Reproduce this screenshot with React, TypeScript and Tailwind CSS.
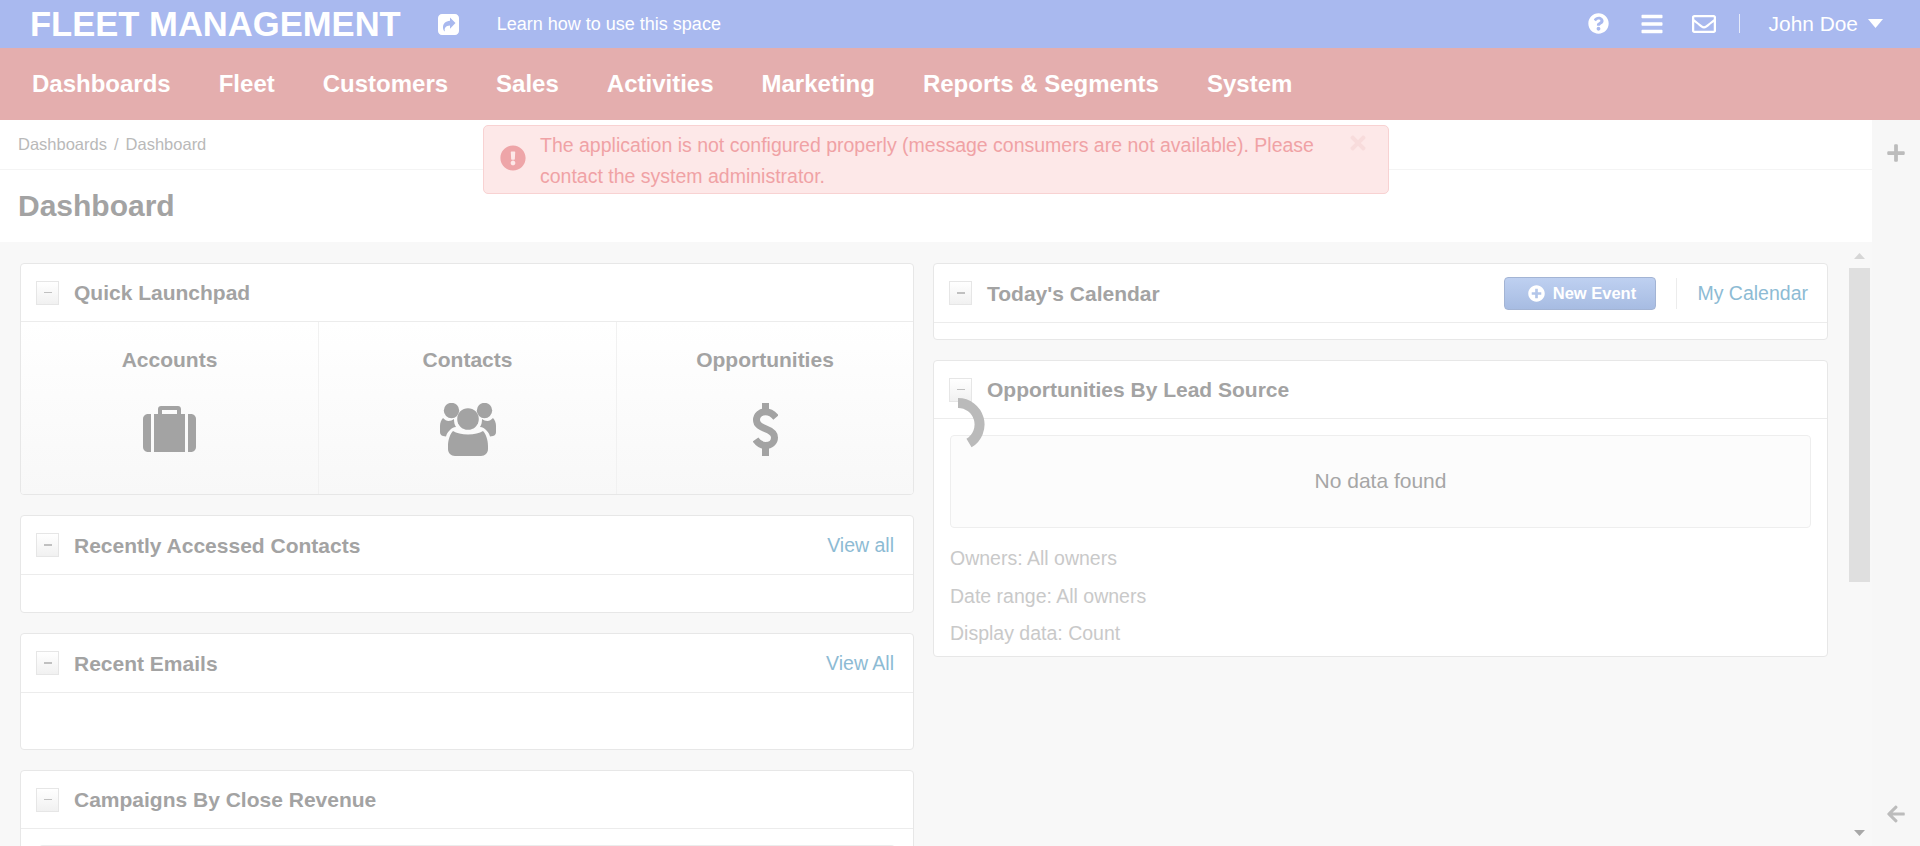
import React from "react";
import {
  FaQuestionCircle,
  FaBars,
  FaRegEnvelope,
  FaPlus,
  FaArrowLeft,
  FaExclamationCircle,
  FaPlusCircle,
  FaTimes,
} from "react-icons/fa";

const nav = ["Dashboards", "Fleet", "Customers", "Sales", "Activities", "Marketing", "Reports & Segments", "System"];

function ShareIcon() {
  return (
    <svg width="21" height="21" viewBox="0 0 21 21" className="ml-[37px] shrink-0">
      <path
        fillRule="evenodd"
        fill="#ffffff"
        d="M4 0h13c2.200 0 4 1.800 4 4v13c0 2.200-1.800 4-4 4H4c-2.200 0-4-1.800-4-4V4c0-2.200 1.800-4 4-4zM12 3.500v3.200C7.500 7 5 9.500 5 13.500c0 1.300.5 2.700 1.300 3.700.3.300.6.100.5-.2-.6-3 .9-5.200 5.200-5.400v3.200l5.500-5.700z"
      />
    </svg>
  );
}

function SuitcaseIcon() {
  return (
    <svg width="53" height="46" viewBox="0 0 53 46" fill="#a3a3a3">
      <path d="M15 8V3c0-1.700 1.300-3 3-3h17c1.700 0 3 1.300 3 3v5h-4V4H19v4z" />
      <path d="M8 8H5c-2.800 0-5 2.200-5 5v28c0 2.800 2.200 5 5 5h3z" />
      <path d="M11 8h31v38H11z" />
      <path d="M45 8h3c2.800 0 5 2.200 5 5v28c0 2.800-2.200 5-5 5h-3z" />
    </svg>
  );
}

function GroupIcon() {
  const side = "M3 15c2 2 3.500 3 5.500 3s4-1 5.500-2c0 3 .5 6 2 8-2.500 0-5 1.500-6 3-2 2-3.500 4-4 6.500L3 33c-2-.5-3-2-3-4v-6c0-3 1-6 3-8z";
  return (
    <svg width="56" height="53" viewBox="0 0 56 53" fill="#a3a3a3">
      <circle cx="11.500" cy="7.500" r="7.700" />
      <circle cx="44.500" cy="7.500" r="7.700" />
      <path d={side} />
      <g transform="translate(56,0) scale(-1,1)">
        <path d={side} />
      </g>
      <circle cx="28" cy="16" r="10.800" />
      <path d="M13 28c3.500 2.200 8.500 3.500 15 3.500s11.500-1.300 15-3.500c3 3 5 9 5 15v3c0 4-3 7-7 7H15c-4 0-7-3-7-7v-3c0-6 2-12 5-15z" />
    </svg>
  );
}

function DollarIcon() {
  return (
    <svg width="25" height="53" viewBox="0 0 25 53" fill="none">
      <path d="M9 0h7v8H9zM9 45h7v8H9z" fill="#a3a3a3" />
      <path
        d="M23 14.500C20 11 16.500 8.800 12.500 8.800 7.500 8.800 3.500 12 3.500 17 3.500 22 8 24 12.500 25.800 17 27.500 21.500 29.500 21.500 34.500 21.500 39.500 17.500 42.500 12.500 42.500 8.500 42.500 5 40 2.500 36.500"
        stroke="#a3a3a3"
        strokeWidth="7"
      />
    </svg>
  );
}

function Caret({ up, color, w, h, className = "" }: { up?: boolean; color: string; w: number; h: number; className?: string }) {
  return (
    <svg width={w} height={h} viewBox="0 0 12 7" preserveAspectRatio="none" className={`shrink-0 ${className}`}>
      <path d={up ? "M6 0l6 7H0z" : "M0 0h12L6 7z"} fill={color} />
    </svg>
  );
}

function Collapse() {
  return (
    <span className="flex h-[24px] w-[23px] shrink-0 items-center justify-center border border-[#e6e6e6] bg-gradient-to-b from-[#ffffff] to-[#f1f1f1] text-[#a8a8a8]">
      <span className="h-[1.5px] w-[8px] bg-[#c0c0c0]" />
    </span>
  );
}

function Head({ title, right, h = "h-[58px]" }: { title: string; right?: React.ReactNode; h?: string }) {
  return (
    <div className={`flex ${h} shrink-0 items-center border-b border-[#ececec] pl-[15px] pr-[19px]`}>
      <Collapse />
      <h2 className="ml-[15px] text-[21px] font-bold leading-none text-[#a3a3a3]">{title}</h2>
      {right && <div className="ml-auto flex items-center">{right}</div>}
    </div>
  );
}

function Card({ className = "", children }: { className?: string; children: React.ReactNode }) {
  return (
    <section className={`flex shrink-0 flex-col overflow-hidden rounded-[4px] border border-[#e7e7e7] bg-white ${className}`}>
      {children}
    </section>
  );
}

function Launch({ label, icon, divide }: { label: string; icon: React.ReactNode; divide?: boolean }) {
  return (
    <div className={`flex flex-col items-center pt-[26px] ${divide ? "border-r border-[#f1f1f1]" : ""}`}>
      <span className="text-[21px] font-bold leading-[24px] text-[#a3a3a3]">{label}</span>
      <span className="mt-[29px] flex h-[56px] items-center justify-center">{icon}</span>
    </div>
  );
}

export default function App() {
  return (
    <div
      className="relative flex h-[846px] w-[1920px] flex-col overflow-hidden bg-[#f8f8f8]"
      style={{ fontFamily: '"Liberation Sans", Arial, sans-serif' }}
    >
      <header className="flex h-[48px] shrink-0 items-center bg-[#a9b9ef] pl-[30px] pr-[37px] text-white">
        <span className="text-[34.600px] font-bold leading-none">FLEET MANAGEMENT</span>
        <ShareIcon />
        <span className="ml-[38px] text-[18px]">Learn how to use this space</span>
        <div className="ml-auto flex items-center">
          <FaQuestionCircle className="text-[21px]" />
          <FaBars className="ml-[31px] text-[24px]" />
          <FaRegEnvelope className="ml-[28px] text-[24px]" />
          <span className="ml-[23px] h-[19px] w-px bg-white/70" />
          <span className="ml-[29px] text-[20.900px]">John Doe</span>
          <Caret color="#ffffff" w={15} h={9} className="ml-[10px]" />
        </div>
      </header>
      <nav className="flex h-[72px] shrink-0 items-center gap-[48px] bg-[#e4aeae] pl-[32px] text-[24px] font-bold text-white">
        {nav.map((n) => (
          <span key={n}>{n}</span>
        ))}
      </nav>
      <div className="flex min-h-0 flex-1">
        <main className="flex min-w-0 flex-1 flex-col">
          <div className="flex h-[50px] shrink-0 items-center border-b border-[#f4f4f4] bg-white pl-[18px] text-[16.500px] text-[#b9b9b9]">
            Dashboards<span className="mx-[7px]">/</span>Dashboard
          </div>
          <div className="flex h-[72px] shrink-0 items-center bg-white pb-[2px] pl-[18px] text-[30px] font-bold text-[#a3a3a3]">
            Dashboard
          </div>
          <div className="flex min-h-0 flex-1 pl-[20px] pt-[21px]">
            <div className="flex w-[894px] shrink-0 flex-col gap-[20px]">
              <Card className="h-[232px]">
                <Head title="Quick Launchpad" />
                <div className="grid flex-1 grid-cols-[298px_298px_1fr] bg-gradient-to-b from-[#ffffff] to-[#f8f8f8]">
                  <Launch label="Accounts" divide icon={<SuitcaseIcon />} />
                  <Launch label="Contacts" divide icon={<GroupIcon />} />
                  <Launch label="Opportunities" icon={<DollarIcon />} />
                </div>
              </Card>
              <Card className="h-[98px]">
                <Head
                  h="h-[59px]"
                  title="Recently Accessed Contacts"
                  right={<a className="pt-[2px] text-[19.500px] text-[#8dbbd4]">View all</a>}
                />
              </Card>
              <Card className="h-[117px]">
                <Head
                  h="h-[59px]"
                  title="Recent Emails"
                  right={<a className="pt-[2px] text-[19.500px] text-[#8dbbd4]">View All</a>}
                />
              </Card>
              <Card className="h-[120px]">
                <Head title="Campaigns By Close Revenue" />
                <div className="mx-[18px] mt-[16px] flex-1 rounded-t-[4px] border-t border-[#ececec]" />
              </Card>
            </div>
            <div className="ml-[19px] flex w-[895px] shrink-0 flex-col gap-[20px]">
              <Card className="h-[77px]">
                <Head
                  h="h-[59px]"
                  title="Today's Calendar"
                  right={
                    <>
                      <button className="mt-[1px] flex h-[33px] w-[152px] items-center justify-center rounded-[4px] border border-[#a3b4d4] bg-gradient-to-b from-[#bed0f1] to-[#a7bce2] pl-[3px] text-[16.500px] font-bold text-white">
                        <FaPlusCircle className="mr-[8px] text-[17px]" />
                        New Event
                      </button>
                      <span className="ml-[20px] h-[31px] w-px bg-[#ececec]" />
                      <a className="ml-[20px] pt-[2px] text-[19.500px] text-[#8dbbd4]">My Calendar</a>
                    </>
                  }
                />
              </Card>
              <Card className="h-[297px]">
                <Head title="Opportunities By Lead Source" />
                <div className="mx-[16px] mt-[16px] flex h-[93px] shrink-0 items-center justify-center rounded-[4px] border border-[#eeeeee] bg-[#fcfcfc] pb-[2px] text-[21px] text-[#a6a6a6]">
                  No data found
                </div>
                <div className="mx-[16px] mt-[19px] flex flex-col gap-[14.500px] text-[19.500px] leading-[23px] text-[#c9c9c9]">
                  <span>Owners: All owners</span>
                  <span>Date range: All owners</span>
                  <span>Display data: Count</span>
                </div>
              </Card>
            </div>
            <div className="ml-[21px] flex h-[583px] w-[21px] shrink-0 -translate-y-[10px] flex-col items-center">
              <Caret up color="#d6d6d6" w={11} h={6} />
              <div className="mt-[9px] h-[314px] w-full bg-[#dfdfdf]" />
              <Caret color="#a8a8a8" w={11} h={6} className="mt-auto" />
            </div>
          </div>
        </main>
        <aside className="flex w-[48px] shrink-0 flex-col items-center justify-between bg-[#f7f7f7] pb-[22px] pt-[23px]">
          <FaPlus className="text-[20px] text-[#bcbcbc]" />
          <FaArrowLeft className="text-[20px] text-[#bcbcbc]" />
        </aside>
      </div>

      <div className="absolute left-[483px] top-[125px] flex h-[69px] w-[906px] rounded-[5px] border border-[#f8d2d2] bg-[#fde8e8] pl-[16px] pr-[19px] text-[#f0a2a5]">
        <FaExclamationCircle className="mt-[19px] shrink-0 text-[26px] text-[#eea5a8]" />
        <p className="ml-[14px] flex-1 pt-[4px] text-[19.500px] leading-[30.500px]">
          The application is not configured properly (message consumers are not available). Please contact the system administrator.
        </p>
        <FaTimes className="ml-[20px] mt-[6px] shrink-0 text-[22px] text-[#f8dcdc]" />
      </div>

      <svg className="absolute left-[950px] top-[398px]" width="40" height="52" viewBox="0 0 40 52" fill="none">
        <path d="M8 5A21.500 21.500 0 0 1 19 45" stroke="#bababa" strokeWidth="10" />
      </svg>
    </div>
  );
}
